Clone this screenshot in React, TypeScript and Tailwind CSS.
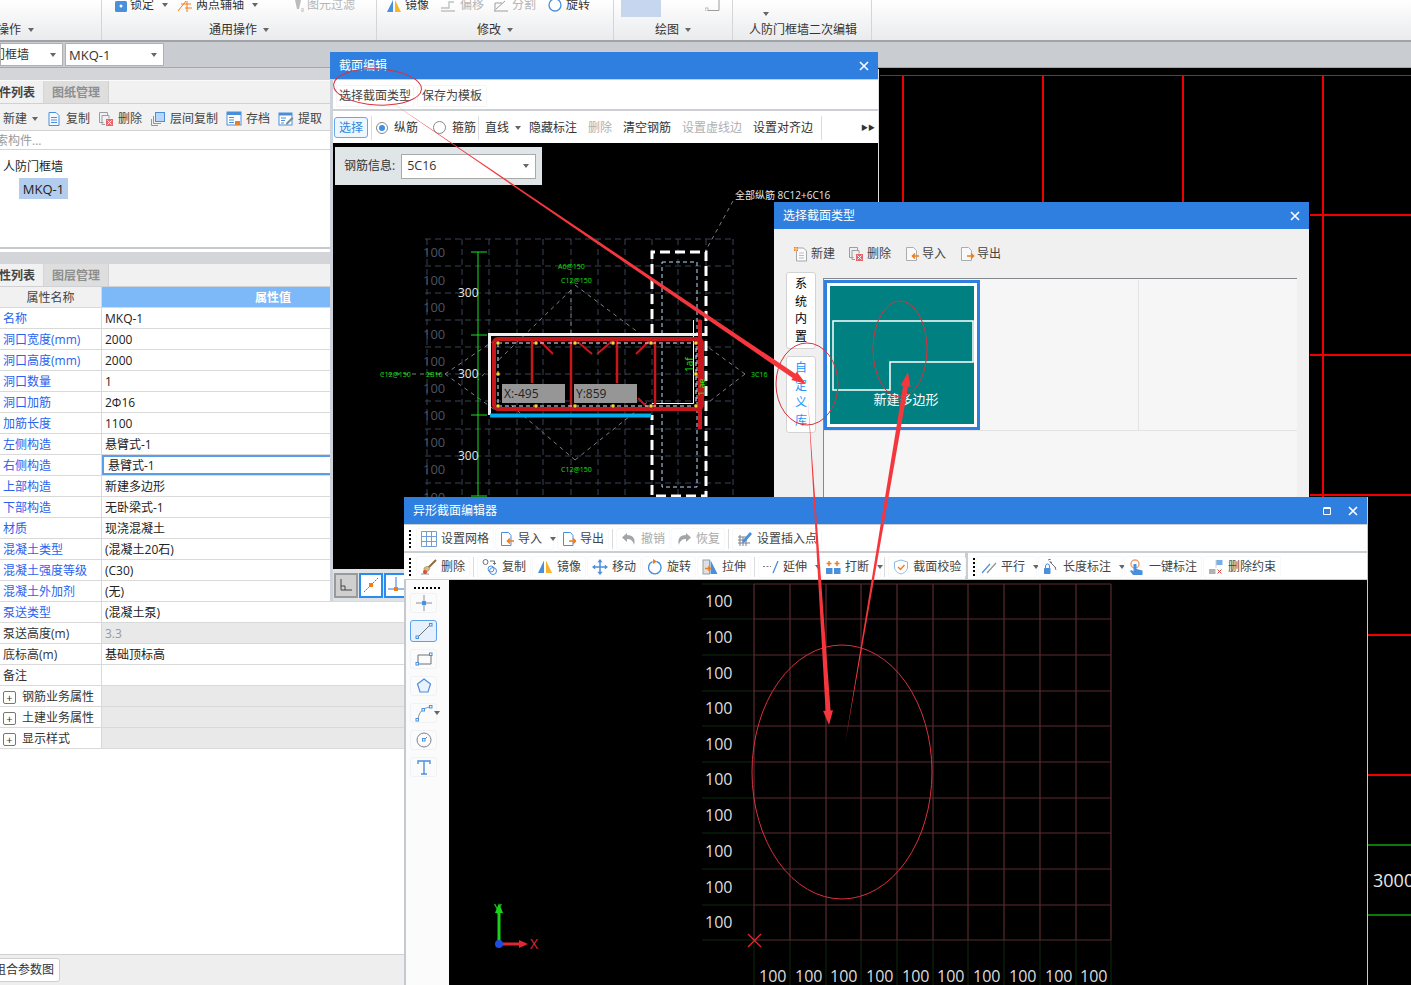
import type { ReactNode } from "react";

const Svg = ({ children, w = 16, h = 16 }: { children: ReactNode; w?: number; h?: number }) => (
  <svg width={w} height={h} viewBox={`0 0 ${w} ${h}`} fill="none" className="shrink-0">
    {children}
  </svg>
);

const B = "#4a8fdc";
const O = "#f07d1a";

const icons: Record<string, ReactNode> = {
  copy: (
    <Svg>
      <path d="M3 1.5h7l3 3v10H3z" stroke={B} fill="#f3f8fe" />
      <path d="M5 6.5h6M5 9h6M5 11.5h6" stroke={B} />
    </Svg>
  ),
  del: (
    <Svg>
      <path d="M1.5 1.5h8v3M1.5 1.5v10h4" stroke="#9a9da3" />
      <path d="M4 4.5h7v3M4 4.5v9h3" stroke="#9a9da3" />
      <rect x="8" y="8" width="7" height="7" fill="#e8636b" />
      <path d="M9.5 9.5l4 4M13.5 9.5l-4 4" stroke="#fff" />
    </Svg>
  ),
  layer: (
    <Svg>
      <rect x="5.5" y="1.5" width="9" height="9" fill="#b8d6f8" stroke={B} />
      <path d="M3.5 5v7.5H11M1.5 8v6.5H8" stroke={O} />
    </Svg>
  ),
  save: (
    <Svg>
      <rect x="1" y="1" width="14" height="13" fill="#fff" stroke={B} />
      <rect x="1" y="1" width="14" height="3" fill={B} />
      <path d="M3 6.5h5M3 9h5M3 11.5h5" stroke={B} />
      <rect x="9" y="10" width="5" height="4" fill={O} />
    </Svg>
  ),
  extract: (
    <Svg>
      <rect x="1" y="2" width="13" height="12" fill="#fff" stroke={B} />
      <rect x="1" y="2" width="13" height="2.5" fill={B} />
      <path d="M3 7h5M3 9.5h4M3 12h3" stroke={B} />
      <path d="M8 12l6-6 1.5 1.5-6 6H8z" fill="#7f8b99" />
    </Svg>
  ),
  newDoc: (
    <Svg>
      <path d="M3.5 2h7l3 3v10h-10z" stroke="#a4a7ab" fill="#fafafa" />
      <path d="M6 7h5M6 9.5h5M6 12h5" stroke="#b9bcc0" />
      <rect x="1" y="1" width="4" height="4" fill={O} />
      <path d="M1 3h4M3 1v4" stroke="#fff" strokeWidth=".6" />
    </Svg>
  ),
  importDoc: (
    <Svg>
      <path d="M2.5 1.5h7l3 3v10h-10z" stroke="#a9adb3" fill="#f9f9f9" />
      <path d="M15 10H9M11 7.5L8.5 10l2.5 2.5" stroke={O} strokeWidth="1.6" />
    </Svg>
  ),
  exportDoc: (
    <Svg>
      <path d="M2.5 1.5h7l3 3v10h-10z" stroke="#a9adb3" fill="#f9f9f9" />
      <path d="M8 10h6M12 7.5l2.5 2.5-2.5 2.5" stroke={O} strokeWidth="1.6" />
    </Svg>
  ),
  importBlue: (
    <Svg w={14}>
      <path d="M1.5 1.5h7l2.5 3v10h-9.500z" stroke={B} fill="#fff" />
      <path d="M14 10H8M10 7.500L7.500 10l2.500 2.500" stroke={O} strokeWidth="1.6" />
    </Svg>
  ),
  exportBlue: (
    <Svg w={14}>
      <path d="M1.5 1.5h7l2.5 3v10h-9.500z" stroke={B} fill="#fff" />
      <path d="M7 10h6M11 7.500l2.500 2.500-2.500 2.500" stroke={O} strokeWidth="1.6" />
    </Svg>
  ),
  grid: (
    <Svg>
      <path d="M.5.5h15v15H.5zM5.5.5v15M10.5.5v15M.5 5.5h15M.5 10.5h15" stroke="#6f9fd8" />
    </Svg>
  ),
  undo: (
    <Svg>
      <path d="M6 2L1 6.5 6 11V8c3 0 6 1 7 6 2-6-1-10-7-10z" fill="#a3a6a9" />
    </Svg>
  ),
  redo: (
    <Svg>
      <path d="M10 2l5 4.5-5 4.5V8c-3 0-6 1-7 6-2-6 1-10 7-10z" fill="#a3a6a9" />
    </Svg>
  ),
  insert: (
    <Svg>
      <path d="M1 6h8M1 9h9M1 12h12M3 4v11M6 6v9M9 9v6" stroke="#7b7f85" />
      <path d="M6 9l7-8 2 2-7 8-3 1z" fill={B} />
    </Svg>
  ),
  broom: (
    <Svg>
      <path d="M15 1L7 9" stroke="#8a6d3b" strokeWidth="2" />
      <path d="M3 9c2-2 4-2 6 0-1 3-3 5-6 5z" fill="#d9b98a" stroke="#9c8054" strokeWidth=".6" />
      <circle cx="4" cy="13" r="2" fill="#d8552a" />
      <path d="M0 15h8" stroke="#666" strokeWidth=".7" />
    </Svg>
  ),
  copy2: (
    <Svg>
      <circle cx="3.5" cy="3" r="2.5" stroke="#6b7077" />
      <path d="M8 2h4.5v3M11 4l1.5 1.5L14 4" stroke="#6b7077" />
      <circle cx="9" cy="10" r="3" stroke={B} />
      <circle cx="11" cy="12" r="3.5" stroke={B} />
    </Svg>
  ),
  mirror: (
    <Svg>
      <path d="M7 1.5V14H1z" fill={B} />
      <path d="M9 1.5V14h6z" fill="#f7b52c" />
    </Svg>
  ),
  move: (
    <Svg>
      <path d="M8 2v12M2 8h12" stroke={B} strokeWidth="1.5" />
      <path d="M8 0l2.6 3.2H5.4zM8 16l2.6-3.2H5.4zM0 8l3.2-2.6v5.2zM16 8l-3.2-2.6v5.2z" fill={B} />
    </Svg>
  ),
  rotate: (
    <Svg>
      <path d="M5.5 2.7a6.3 6.3 0 1 0 4-.2" stroke={B} strokeWidth="1.4" />
      <path d="M6 0v5l4-2.5z" fill={O} />
    </Svg>
  ),
  stretch: (
    <Svg>
      <rect x="1" y="1" width="6.5" height="14" fill="#dde0e3" stroke="#9a9da1" />
      <path d="M8.5 1L15.5 15h-7z" fill={B} />
      <path d="M3 9.5h5M6 7.5l2.5 2-2.5 2" stroke={O} strokeWidth="1.4" />
    </Svg>
  ),
  extend: (
    <Svg>
      <path d="M0 7.5h8" stroke="#7b7f85" strokeDasharray="2 1.5" />
      <path d="M10 14l5-12" stroke={B} strokeWidth="1.3" />
    </Svg>
  ),
  cut: (
    <Svg>
      <rect x="1" y="9" width="6.5" height="6" fill={B} />
      <rect x="9" y="9" width="6.5" height="6" fill={B} />
      <path d="M4 2v5M1.5 4.5h5M12 2v5M9.5 4.5h5" stroke={O} strokeWidth="1.5" />
    </Svg>
  ),
  shield: (
    <Svg>
      <path d="M8 1l6.5 2v5c0 3.5-3 6-6.5 7-3.5-1-6.5-3.5-6.5-7V3z" stroke="#8db9ea" />
      <path d="M5 8l2.5 2.5L11.5 6" stroke={O} strokeWidth="1.4" />
    </Svg>
  ),
  parallel: (
    <Svg>
      <path d="M1 14L9 5" stroke={B} strokeWidth="1.2" />
      <path d="M6 14l9-10" stroke="#8f9398" strokeWidth="1.2" />
    </Svg>
  ),
  length: (
    <Svg>
      <rect x="1" y="9" width="6.5" height="6" rx=".7" fill={B} />
      <path d="M2.5 9V7a2 2 0 0 1 4 0v2" stroke={B} />
      <path d="M5 1l3-1M7 3l6 6M9 3.5L6.5 2.5M12 8.5l1 2.5" stroke="#6d7177" />
    </Svg>
  ),
  touch: (
    <Svg>
      <circle cx="6" cy="5" r="4" stroke="#ee9a6c" strokeWidth="1.4" />
      <path d="M4.5 5h3v5l6 1.5V16H4l-3-4 1.5-1 2 1.5z" fill={B} />
    </Svg>
  ),
  unlink: (
    <Svg>
      <rect x="1" y="10" width="6.5" height="5" fill="#aeb1b5" />
      <rect x="8" y="1" width="6.5" height="5" fill="#79aee8" />
      <path d="M8 1v8" stroke="#cfd2d6" />
      <path d="M9.5 10.5l4 4M13.5 10.5l-4 4" stroke="#d6453d" />
    </Svg>
  ),
};

const Caret = ({ className = "" }: { className?: string }) => (
  <span className={`inline-block h-0 w-0 border-x-[3.5px] border-t-[4px] border-x-transparent border-t-[#666] ${className}`} />
);

const Tool = ({ icon, label, caret, muted, className = "" }: { icon: string; label: string; caret?: boolean; muted?: boolean; className?: string }) => (
  <div className={`flex h-[22px] items-center gap-[3px] rounded-[3px] border border-[#f8f8f8] px-[4px] ${className}`}>
    {icons[icon]}
    <span className={`ml-[1px] whitespace-nowrap ${muted ? "text-[#aaa]" : "text-[#444]"}`}>{label}</span>
    {caret && <Caret className="ml-[5px] mr-[-7px]" />}
  </div>
);

const Sep = () => <div className="mx-[2px] h-[20px] w-px bg-[#d9dbde]" />;

const Dots = () => (
  <div className="mx-[2px] flex flex-col gap-[2px]">
    <span className="h-[2px] w-[2px] bg-black" />
    <span className="h-[2px] w-[2px] bg-black" />
    <span className="h-[2px] w-[2px] bg-black" />
    <span className="h-[2px] w-[2px] bg-black" />
    <span className="h-[2px] w-[2px] bg-black" />
  </div>
);

const TitleBar = ({ title, children }: { title: string; children?: ReactNode }) => (
  <div className="flex h-[27px] shrink-0 items-center justify-between bg-[#2e7fe0] pl-[9px] pr-[8px] text-white">
    <span>{title}</span>
    <div className="flex items-center gap-[16px]">
      {children}
      <svg width="10" height="10" viewBox="0 0 10 10" className="mr-[1px]">
        <path d="M1 1l8 8M9 1l-8 8" stroke="#fff" strokeWidth="1.6" />
      </svg>
    </div>
  </div>
);

const rows: { name: string; value?: string; blue?: boolean; gray?: boolean; sel?: boolean }[] = [
  { name: "名称", value: "MKQ-1", blue: true },
  { name: "洞口宽度(mm)", value: "2000", blue: true },
  { name: "洞口高度(mm)", value: "2000", blue: true },
  { name: "洞口数量", value: "1", blue: true },
  { name: "洞口加筋", value: "2Φ16", blue: true },
  { name: "加筋长度", value: "1100", blue: true },
  { name: "左侧构造", value: "悬臂式-1", blue: true },
  { name: "右侧构造", value: "悬臂式-1", blue: true, sel: true },
  { name: "上部构造", value: "新建多边形", blue: true },
  { name: "下部构造", value: "无卧梁式-1", blue: true },
  { name: "材质", value: "现浇混凝土", blue: true },
  { name: "混凝土类型", value: "(混凝土20石)", blue: true },
  { name: "混凝土强度等级", value: "(C30)", blue: true },
  { name: "混凝土外加剂", value: "(无)", blue: true },
  { name: "泵送类型", value: "(混凝土泵)", blue: true },
  { name: "泵送高度(m)", value: "3.3", gray: true },
  { name: "底标高(m)", value: "基础顶标高" },
  { name: "备注", value: "" },
];

const Expand = ({ name, gray = true }: { name: string; gray?: boolean }) => (
  <div className="flex h-[21px] border-b border-[#d9d9d9]">
    <div className="flex w-[102px] items-center border-r border-[#d9d9d9] pl-[3px] pt-[2px]">
      <span className="mr-[6px] flex h-[13px] w-[13px] items-center justify-center rounded-[2px] border border-[#777] text-[11px] leading-none text-[#333]">+</span>
      <span>{name}</span>
    </div>
    <div className={`flex-1 ${gray ? "bg-[#e9e9e9]" : ""}`} />
  </div>
);

const Ribbon = () => (
  <div className="flex h-[42px] shrink-0 border-b-2 border-[#a0a2a5] bg-gradient-to-b from-white to-[#e9ebed]">
    <div className="relative flex w-[102px] flex-col justify-end border-r border-[#d3d5d8] pb-[2px]">
      <div className="flex items-center gap-[7px] pl-0 text-[#333]">
        <span className="-ml-[3px]">操作</span>
        <Caret />
      </div>
    </div>
    <div className="flex w-[275px] flex-col border-r border-[#d3d5d8] pb-[2px]">
      <div className="flex h-[12px] items-end gap-[3px] overflow-hidden pl-[13px] text-[#333]">
        <svg width="12" height="12" viewBox="0 0 12 12" className="shrink-0">
          <rect x="0" y="1" width="12" height="11" rx="1.5" fill={B} />
          <circle cx="6" cy="6" r="1.5" fill="#fff" />
        </svg>
        <span className="leading-[15px]">锁定</span>
        <Caret className="mx-[5px] mb-[5px]" />
        <svg width="16" height="12" viewBox="0 0 16 12" fill="none" className="ml-[1px] shrink-0">
          <path d="M1 11L9 1M4 4h10M8 8h7M10 1v11" stroke={O} />
        </svg>
        <span className="leading-[15px]">两点辅轴</span>
        <Caret className="mx-[5px] mb-[5px]" />
        <svg width="10" height="12" viewBox="0 0 10 12" fill="none" className="ml-[28px] shrink-0">
          <path d="M1 0h6L5 9H3z" fill="#b9bbbd" />
          <path d="M7 9h3M7 11h3" stroke="#b9bbbd" />
        </svg>
        <span className="leading-[15px] text-[#b5b5b5]">图元过滤</span>
      </div>
      <div className="mt-auto flex items-center justify-center gap-[6px] text-[#333]">
        <span>通用操作</span>
        <Caret />
      </div>
    </div>
    <div className="flex w-[237px] flex-col border-r border-[#d3d5d8] pb-[2px]">
      <div className="flex h-[12px] items-end overflow-hidden pl-[10px] text-[#333]">
        <svg width="14" height="12" viewBox="0 0 14 12" className="shrink-0">
          <path d="M6 0v12H0z" fill={B} />
          <path d="M8 0v12h6z" fill="#f7b52c" />
        </svg>
        <span className="ml-[4px] leading-[15px]">镜像</span>
        <svg width="16" height="12" viewBox="0 0 16 12" fill="none" className="ml-[11px] shrink-0">
          <path d="M1 11h14M1 8h8V2h5" stroke="#bfc1c3" strokeWidth="1.4" />
        </svg>
        <span className="ml-[4px] leading-[15px] text-[#b5b5b5]">偏移</span>
        <svg width="16" height="12" viewBox="0 0 16 12" fill="none" className="ml-[9px] shrink-0">
          <path d="M1 11h14M2 11V3h7M3 9l9-8" stroke="#9c9ea0" />
        </svg>
        <span className="ml-[3px] leading-[15px] text-[#b5b5b5]">分割</span>
        <svg width="14" height="12" viewBox="0 0 14 12" className="ml-[12px] shrink-0">
          <circle cx="7" cy="5" r="6" stroke={B} fill="#fff" strokeWidth="1.3" />
        </svg>
        <span className="ml-[4px] leading-[15px]">旋转</span>
      </div>
      <div className="mt-auto flex items-center justify-center gap-[6px] text-[#333]">
        <span>修改</span>
        <Caret />
      </div>
    </div>
    <div className="flex w-[119px] flex-col border-r border-[#d3d5d8] pb-[2px]">
      <div className="flex items-start justify-between pl-[7px] pr-[11px]">
        <div className="h-[17px] w-[40px] bg-[#c5d6ee]" />
        <svg width="16" height="11" viewBox="0 0 16 11" fill="none">
          <path d="M1 10.5h13V0M1 10.5V8" stroke="#9a9c9f" />
          <rect x="0" y="8" width="3" height="3" fill="#fff" stroke="#9a9c9f" strokeWidth=".7" />
        </svg>
      </div>
      <div className="mt-auto flex items-center justify-center gap-[6px] text-[#333]">
        <span>绘图</span>
        <Caret />
      </div>
    </div>
    <div className="flex w-[139px] flex-col border-r border-[#d3d5d8] pb-[2px] pl-[2px]">
      <div className="pl-[28px] pt-[6px] leading-none">
        <Caret className="block" />
      </div>
      <div className="mt-auto whitespace-nowrap text-center text-[#333]">人防门框墙二次编辑</div>
    </div>
  </div>
);

const Tabs = ({ first, second }: { first: string; second: string }) => (
  <div className="flex h-[23px] shrink-0 border-b border-[#cfd1d4] bg-[#f1f1f1]">
    <div className="flex w-[44px] items-center justify-end overflow-hidden border-r border-[#d6d6d6] pr-[8px] pt-[2px] font-semibold whitespace-nowrap text-[#444]">
      {first}
    </div>
    <div className="flex w-[65px] items-center justify-center border-r border-[#d0d0d0] bg-[#dedede] pt-[2px] font-semibold text-[#8e8e8e]">{second}</div>
  </div>
);

const LeftPanel = () => (
  <div className="flex w-[404px] shrink-0 flex-col overflow-hidden bg-white">
    <div className="h-[13px] shrink-0 border-b border-[#fafafa] bg-[#d3d5d9]" />
    <Tabs first="构件列表" second="图纸管理" />
    <div className="flex h-[27px] shrink-0 items-center border-b border-[#cfd1d4] bg-[#f2f2f2] pl-[3px] pt-[3px] text-[#444]">
      <span>新建</span>
      <Caret className="ml-[5px] mr-[8px]" />
      <div className="-ml-[1px] flex items-center gap-[1px]">
        <div className="flex items-center gap-[4px] pl-[1px] pr-[7px]">{icons.copy}<span>复制</span></div>
        <div className="flex items-center gap-[4px] pr-[7px]">{icons.del}<span>删除</span></div>
        <div className="flex items-center gap-[4px] pr-[7px]">{icons.layer}<span>层间复制</span></div>
        <div className="flex items-center gap-[4px] pr-[7px]">{icons.save}<span>存档</span></div>
        <div className="flex items-center gap-[4px]">{icons.extract}<span>提取</span></div>
      </div>
    </div>
    <div className="h-[19px] shrink-0 overflow-hidden border-b border-[#d3d5d8] whitespace-nowrap text-[#9a9a9a]">
      <span className="-ml-[16px] inline-block leading-[20px]">搜索构件...</span>
    </div>
    <div className="h-[97px] shrink-0 pl-[3px] pt-[8px] text-[#222]">
      <div className="leading-[18px]">人防门框墙</div>
      <div className="mt-[2px] ml-[16px] flex h-[21px] w-[49px] items-center justify-center bg-[#b3cdee] text-[13px]">MKQ-1</div>
    </div>
    <div className="h-[5px] shrink-0 border-t-2 border-[#c6c8cb] bg-white" />
    <div className="h-[12px] shrink-0 bg-[#d3d5d9]" />
    <Tabs first="属性列表" second="图层管理" />
    <div className="flex h-[21px] shrink-0 border-b border-[#d9d9d9]">
      <div className="flex w-[102px] items-center justify-center border-r border-[#d9d9d9] bg-[#f1f1f1] pt-[2px] text-[#444]">属性名称</div>
      <div className="flex-1 bg-[#7db8f8] pl-[153px] leading-[22px] font-semibold text-white">属性值</div>
    </div>
    {rows.map((r) => (
      <div key={r.name} className="flex h-[21px] shrink-0 border-b border-[#d9d9d9]">
        <div className={`flex w-[102px] items-center border-r border-[#d9d9d9] pl-[3px] pt-[2px] whitespace-nowrap ${r.blue ? "text-[#2a62ee]" : "text-[#333]"}`}>
          {r.name}
        </div>
        {r.sel ? (
          <div className="flex flex-1 items-center border-2 border-[#5b9de6] pl-[4px] pt-[2px] text-[#222]">{r.value}</div>
        ) : (
          <div className={`flex flex-1 items-center pl-[3px] pt-[2px] ${r.gray ? "bg-[#e9e9e9] text-[#999]" : "text-[#222]"}`}>{r.value}</div>
        )}
      </div>
    ))}
    <Expand name="钢筋业务属性" />
    <Expand name="土建业务属性" />
    <Expand name="显示样式" />
    <div className="flex-1" />
    <div className="flex h-[31px] shrink-0 items-center border-t border-[#cfd1d4] bg-[#eeeeee]">
      <div className="-ml-[12px] rounded-[3px] border border-[#cfcfcf] bg-white px-[5px] py-[3px] whitespace-nowrap text-[#333]">组合参数图</div>
    </div>
  </div>
);

const hGrid = [239, 266, 293, 320, 347, 374, 401, 429, 456, 483];
const vGrid = [427, 462, 489, 517, 543, 571, 598, 625, 652, 678, 706, 733];
const dotsX = [498, 536, 575, 613, 651, 696];

const SectionDrawing = () => (
  <svg viewBox="333 143 545 427" width="545" height="427" fill="none" className="absolute left-0 top-0">
    <g stroke="#3b4252" strokeDasharray="6 4">
      {hGrid.map((y) => <line key={y} x1="425" x2="733" y1={y} y2={y} />)}
      {vGrid.map((x) => <line key={x} x1={x} x2={x} y1="239" y2="497" />)}
    </g>
    <g fill="#4d5363" fontSize="13">
      {[252, 280, 307, 334, 361, 388, 415, 442, 469, 497].map((y) => (
        <text key={y} x="423" y={y + 5}>100</text>
      ))}
    </g>
    <g stroke="#7b7f85" strokeDasharray="4 4">
      <path d="M571 290L478 380M575 285L655 345M575 460L505 400M575 460L650 400M445 374L495 340M445 374L495 410M745 374L705 345M745 374L705 405M440 374H382M733 201L706 250M571 290V340" />
    </g>
    <path d="M478 252V496M471 252H487M471 335H487M471 415H487M471 496H487" stroke="#1de01d" />
    <g fill="#e6e6e6" fontSize="12">
      <text x="458" y="297">300</text>
      <text x="458" y="378">300</text>
      <text x="458" y="460">300</text>
    </g>
    <path d="M652 334V252H706V496H652V415" stroke="#fff" strokeWidth="3" strokeDasharray="10 5" />
    <rect x="662" y="262" width="35" height="225" stroke="#bcd9ff" strokeDasharray="4 3" />
    <path d="M652 403.5H693.5V320" stroke="#fff" />
    <path d="M489.5 415V334.5H705" stroke="#f0f0f0" strokeWidth="3" />
    <g stroke="#c8161d">
      <rect x="494" y="339" width="208" height="70" rx="4" strokeWidth="4" />
      <path d="M700 320V429" strokeWidth="4" />
      <path d="M532 339V383M571 339V409M617 339V383M655 339V409" strokeWidth="2.5" />
      <path d="M538 339L553 354M578 342L592 354M612 341L597 354M650 340L636 354M638 398L648 408" strokeWidth="2" />
    </g>
    <path d="M490 415.5H651" stroke="#00aeef" strokeWidth="4" />
    <rect x="498" y="343" width="198" height="63" stroke="#e8f2ff" strokeDasharray="4 3" />
    <g fill="#ffd633" stroke="#222" strokeWidth=".5">
      {dotsX.map((x) => <circle key={`t${x}`} cx={x} cy="343" r="2" />)}
      {dotsX.map((x) => <circle key={`b${x}`} cx={x} cy="406" r="2" />)}
      <circle cx="498" cy="374" r="2" />
      <circle cx="696" cy="374" r="2" />
    </g>
    <rect x="502" y="384" width="63" height="19" fill="#969696" />
    <rect x="574" y="384" width="63" height="19" fill="#969696" />
    <g fill="#222" fontSize="12">
      <text x="504" y="398">X:-495</text>
      <text x="576" y="398">Y:859</text>
    </g>
    <g fill="#12e012" fontSize="7">
      <text x="558" y="269">A6@150</text>
      <text x="561" y="283">C12@150</text>
      <text x="561" y="472">C12@150</text>
      <text x="380" y="377">C12@150</text>
      <text x="426" y="377">2B16</text>
      <text x="751" y="377">3C16</text>
      <text x="693" y="372" fontSize="10" transform="rotate(-90 693 372)">1af</text>
      <text x="705" y="396" fontSize="9" transform="rotate(-90 705 396)">1 ae</text>
    </g>
    <text x="735" y="199" fill="#e6e6e6" fontSize="10">全部纵筋 8C12+6C16</text>
  </svg>
);

const SectionEditor = () => (
  <div className="absolute left-[330px] top-[52px] flex h-[549px] w-[548px] flex-col border-l-[3px] border-[#cdd3da] bg-[#ccd0d5]">
    <div className="-ml-[3px]">
      <TitleBar title="截面编辑" />
    </div>
    <div className="mt-px flex h-[29px] shrink-0 items-center gap-[3px] bg-white pl-[3px] pt-[2px] text-[#444]">
      <span className="rounded-[2px] border border-[#f5f5f5] px-[2px] py-[2px]">选择截面类型</span>
      <span className="rounded-[2px] border border-[#f5f5f5] px-[4px] py-[2px]">保存为模板</span>
    </div>
    <div className="mt-[2px] flex h-[32px] shrink-0 items-center bg-white pt-[1px] text-[#333]">
      <span className="ml-[1px] flex h-[21px] w-[34px] items-center justify-center rounded-[3px] border border-[#66a8ee] bg-[#eef6fe] text-[#2f86e0]">选择</span>
      <div className="ml-[3px] mr-[4px] h-[24px] w-px bg-[#d9dbde]" />
      <span className="flex h-[12px] w-[12px] items-center justify-center rounded-full border border-[#888]">
        <span className="h-[6px] w-[6px] rounded-full bg-[#3b8fe8]" />
      </span>
      <span className="ml-[6px]">纵筋</span>
      <span className="ml-[15px] h-[13px] w-[13px] rounded-full border border-[#888]" />
      <span className="ml-[6px]">箍筋</span>
      <div className="ml-[2px] mr-[6px] h-[24px] w-px bg-[#d9dbde]" />
      <span>直线</span>
      <Caret className="ml-[6px]" />
      <span className="ml-[8px]">隐藏标注</span>
      <span className="ml-[11px] text-[#b0b0b0]">删除</span>
      <span className="ml-[11px]">清空钢筋</span>
      <span className="ml-[11px] text-[#b0b0b0]">设置虚线边</span>
      <span className="ml-[11px]">设置对齐边</span>
      <div className="ml-[8px] h-[24px] w-px bg-[#d9dbde]" />
      <span className="ml-auto mr-[3px] text-[7px] text-[#333]">▶▶</span>
    </div>
    <div className="relative h-[426px] shrink-0 overflow-hidden bg-black">
      <SectionDrawing />
      <div className="absolute left-[2px] top-[4px] flex h-[38px] w-[207px] items-center gap-[6px] bg-[#e0e6e7] pl-[9px] text-[#333]">
        <span>钢筋信息:</span>
        <div className="flex h-[25px] w-[135px] items-center justify-between border border-[#a9a9a9] bg-white pl-[5px] pr-[6px] text-[12.5px]">
          5C16
          <Caret />
        </div>
      </div>
    </div>
    <div className="flex flex-1 items-center gap-[1px] bg-[#dfe3e6] px-[1px]">
      <span className="flex h-[25px] w-[24px] items-center justify-center border-2 border-[#9a9a9a] bg-[#cfcfcf]">
        <svg width="14" height="14" viewBox="0 0 14 14" fill="none"><path d="M2 1v11h11M2 8h4v4" stroke="#444" /></svg>
      </span>
      <span className="flex h-[25px] w-[24px] items-center justify-center border-2 border-[#2b8cf0] bg-white">
        <svg width="16" height="16" viewBox="0 0 16 16" fill="none"><path d="M1 15L15 1" stroke="#2b7de0" strokeDasharray="2 1" /><rect x="6" y="6" width="4" height="4" fill={O} /></svg>
      </span>
      <span className="flex h-[25px] w-[21px] items-center justify-center border-2 border-r-0 border-[#2b8cf0] bg-white">
        <svg width="16" height="16" viewBox="0 0 16 16" fill="none"><path d="M8 0v12M0 12h16" stroke="#2b7de0" /><rect x="6" y="10" width="4" height="4" fill={O} /></svg>
      </span>
    </div>
  </div>
);

const TypePicker = () => (
  <div className="absolute left-[774px] top-[202px] flex h-[296px] w-[535px] flex-col bg-[#f0f0f0]">
    <TitleBar title="选择截面类型" />
    <div className="flex h-[43px] shrink-0 items-center gap-[13px] pl-[19px] pt-[7px] text-[#444]">
      <div className="flex items-center gap-[2px]">{icons.newDoc}<span>新建</span></div>
      <div className="flex items-center gap-[3px]">{icons.del}<span>删除</span></div>
      <div className="flex items-center gap-[2px]">{icons.importDoc}<span>导入</span></div>
      <div className="flex items-center gap-[2px]">{icons.exportDoc}<span>导出</span></div>
    </div>
    <div className="flex flex-1 items-start pl-[12px]">
      <div className="mr-[7px] flex w-[30px] shrink-0 flex-col gap-[7px]">
        <div className="flex h-[77px] flex-col items-center justify-center gap-[5.5px] rounded-[3px] border border-[#d3d3d3] bg-white leading-[12px] text-black">
          <span>系</span><span>统</span><span>内</span><span>置</span>
        </div>
        <div className="flex h-[77px] flex-col items-center justify-center gap-[5.5px] rounded-[3px] border border-[#d3d3d3] bg-white leading-[12px] text-[#1e96ff]">
          <span>自</span><span>定</span><span>义</span><span>库</span>
        </div>
      </div>
      <div className="mt-[6px] h-[220px] w-[474px] shrink-0 border-l border-t border-[#85888c] bg-[#f6f6f6] pt-px">
        <div className="flex h-[151px] border-b border-[#e3e3e3]">
          <div className="flex h-[150px] w-[156px] flex-col border-[3px] border-[#2e7fe0] bg-white p-[3px]">
            <div className="flex flex-1 flex-col items-center bg-[#008080]">
              <svg width="143" height="105" viewBox="830 286 143 105" className="shrink-0">
                <path d="M832 321H972V362H889V390H832Z" fill="none" stroke="#fff" strokeWidth="1.5" />
              </svg>
              <span className="ml-[8px] text-[13px] text-white">新建多边形</span>
            </div>
          </div>
          <div className="w-[159px] border-r border-[#e3e3e3]" />
          <div className="flex-1" />
        </div>
      </div>
    </div>
  </div>
);

const SideButton = ({ children, active }: { children: ReactNode; active?: boolean }) => (
  <div className={`flex w-[27px] items-center justify-center rounded-[3px] border ${active ? "h-[22px] border-[#5aa2ee] bg-[#e6f1fd]" : "h-[20px] border-[#f1f2f4]"}`}>
    {children}
  </div>
);

const SideTools = () => (
  <div className="flex w-[45px] shrink-0 flex-col items-start border-l-2 border-[#c4c9cf] bg-[#fbfbfc] pl-[4px] pt-[7px]">
    <div className="ml-[4px] flex gap-[2px]">
      {[0, 1, 2, 3, 4, 5, 6].map((i) => <span key={i} className="h-[2px] w-[2px] bg-black" />)}
    </div>
    <div className="mt-[4px] flex flex-col gap-[7px]">
      <SideButton>
        <svg width="16" height="16" viewBox="0 0 16 16"><path d="M8 0v5M8 11v5M0 8h5M11 8h5" stroke="#8a8f96" /><circle cx="8" cy="8" r="2.5" fill={B} /></svg>
      </SideButton>
      <SideButton active>
        <svg width="18" height="18" viewBox="0 0 18 18" fill="none"><path d="M3 15L15 3" stroke="#6d7278" /><rect x="1" y="14" width="2.5" height="2.5" stroke={B} /><rect x="14.5" y="1.5" width="2.5" height="2.5" stroke={B} /></svg>
      </SideButton>
      <SideButton>
        <svg width="18" height="14" viewBox="0 0 18 14" fill="none"><path d="M3 3h13v9H3z" stroke="#6d7278" /><rect x="1" y="10.5" width="2.5" height="2.5" fill="#fff" stroke={B} /><rect x="14.5" y="1" width="2.5" height="2.5" fill="#fff" stroke={B} /></svg>
      </SideButton>
      <SideButton>
        <svg width="16" height="16" viewBox="0 0 16 16" fill="none"><path d="M8 1l6.5 5-2.5 8H4L1.5 6z" fill="#eaf3fd" stroke={B} strokeWidth="1.2" /></svg>
      </SideButton>
      <div className="relative">
        <SideButton>
          <svg width="18" height="18" viewBox="0 0 18 18" fill="none"><path d="M3 15C4 8 8 4 15 3" stroke="#85898f" /><rect x="1" y="14.5" width="2.5" height="2.5" stroke={B} /><rect x="7" y="4.5" width="2.5" height="2.5" fill="#fff" stroke={B} /><rect x="14.5" y="1.5" width="2.5" height="2.5" stroke={B} /></svg>
        </SideButton>
        <Caret className="absolute -right-[3px] top-[8px]" />
      </div>
      <SideButton>
        <svg width="16" height="16" viewBox="0 0 16 16" fill="none"><circle cx="8" cy="8" r="7" stroke="#80858b" /><path d="M8 8l3-3" stroke={B} /><rect x="6.5" y="6.5" width="2.5" height="2.5" fill="#fff" stroke={B} /></svg>
      </SideButton>
      <SideButton>
        <svg width="14" height="15" viewBox="0 0 14 15" fill="none"><path d="M1 4V1h12v3M7 1v13M4 14h6" stroke={B} strokeWidth="1.4" /></svg>
      </SideButton>
    </div>
  </div>
);

const gx = [754, 790, 826, 861, 897, 933, 968, 1004, 1040, 1076, 1111];
const gy = [584, 619, 655, 691, 726, 762, 798, 833, 869, 905, 940];

const ShapeCanvas = () => (
  <svg viewBox="449 580 918 405" width="918" height="405" fill="none" className="block">
    <g stroke="#0d2a0d">
      {gy.map((y) => <line key={y} x1="702" x2="754" y1={y} y2={y} />)}
      {gx.map((x) => <line key={x} x1={x} x2={x} y1="940" y2="985" />)}
    </g>
    <g stroke="#5b2a30" strokeWidth="1.2">
      {gy.map((y) => <line key={y} x1="754" x2="1111" y1={y} y2={y} />)}
      {gx.map((x) => <line key={x} x1={x} x2={x} y1="584" y2="940" />)}
    </g>
    <g fill="#dddddd" fontSize="16" fontFamily="Open Sans">
      {[607, 643, 679, 714, 750, 785, 821, 857, 893, 928].map((y) => (
        <text key={y} x="705" y={y}>100</text>
      ))}
      {[759, 795, 830, 866, 902, 937, 973, 1009, 1045, 1080].map((x) => (
        <text key={x} x={x} y="982">100</text>
      ))}
    </g>
    <path d="M748 934l13 13M761 934l-13 13" stroke="#e0282e" strokeWidth="1.4" />
    <path d="M499 943V912" stroke="#19d119" strokeWidth="3" />
    <path d="M499 903l-4 10h8z" fill="#19d119" />
    <text x="494" y="914" fill="#19d119" fontSize="14" fontFamily="Open Sans">Y</text>
    <path d="M500 944h20" stroke="#e0282e" strokeWidth="3" />
    <path d="M528 944l-9-4v8z" fill="#e0282e" />
    <text x="530" y="949" fill="#e0282e" fontSize="14" fontFamily="Open Sans">X</text>
    <circle cx="499" cy="944" r="4" fill="#1b4de0" />
  </svg>
);

const ShapeEditor = () => (
  <div className="absolute left-[404px] top-[497px] flex h-[488px] w-[964px] flex-col border-r border-[#c6cad0] bg-[#c9ced3]">
    <TitleBar title="异形截面编辑器">
      <svg width="8" height="8" viewBox="0 0 8 8" className="mr-[1px]">
        <path d="M.5 1.5h7v6h-7z" fill="none" stroke="#fff" />
        <path d="M.5 1h7" stroke="#fff" strokeWidth="2" />
      </svg>
    </TitleBar>
    <div className="mt-px flex h-[26px] shrink-0 items-center gap-[1px] bg-white pl-[3px] pt-[1px]">
      <Dots />
      <div className="ml-[2px] flex items-center gap-[1px]">
        <Tool icon="grid" label="设置网格" />
        <Tool icon="importBlue" label="导入" caret className="mr-[2px]" />
        <Tool icon="exportBlue" label="导出" />
        <Sep />
        <Tool icon="undo" label="撤销" muted />
        <Tool icon="redo" label="恢复" muted />
        <Sep />
        <Tool icon="insert" label="设置插入点" />
      </div>
    </div>
    <div className="mt-[2px] flex h-[26px] shrink-0 gap-[3px]">
      <div className="flex w-[561px] items-center gap-[1px] bg-white pl-[3px] pt-[1px]">
        <Dots />
        <div className="ml-[2px] flex items-center gap-[1px]">
          <Tool icon="broom" label="删除" />
          <Sep />
          <Tool icon="copy2" label="复制" />
          <Tool icon="mirror" label="镜像" />
          <Tool icon="move" label="移动" />
          <Tool icon="rotate" label="旋转" />
          <Tool icon="stretch" label="拉伸" />
          <Sep />
          <Tool icon="extend" label="延伸" caret />
          <Tool icon="cut" label="打断" caret />
          <Sep />
          <Tool icon="shield" label="截面校验" />
        </div>
      </div>
      <div className="flex flex-1 items-center bg-white pl-[3px] pt-[1px]">
        <Dots />
        <div className="-ml-[1px] flex items-center gap-[1px]">
          <Tool icon="parallel" label="平行" caret />
          <Tool icon="length" label="长度标注" caret />
          <Tool icon="touch" label="一键标注" />
          <Tool icon="unlink" label="删除约束" />
        </div>
      </div>
    </div>
    <div className="mt-px flex flex-1 overflow-hidden">
      <SideTools />
      <div className="flex-1 bg-black">
        <ShapeCanvas />
      </div>
    </div>
  </div>
);

const RightCanvas = () => (
  <div className="flex-1 bg-black">
    <svg viewBox="406 68 1005 917" width="1005" height="917" fill="none" className="block">
      <line x1="878.5" x2="878.5" y1="69" y2="204" stroke="#ddd" />
      <path d="M880 75.5H903" stroke="#106a10" />
      <path d="M903 75.5H1411" stroke="#f00000" />
      <g stroke="#f00000" strokeWidth="2">
        <path d="M1310 215H1411M1310 355H1411M1310 495H1411M1368 635H1411M1368 775H1411" />
        <path d="M903 76V204M1043 76V204M1183 76V204M1323 76V497" />
      </g>
      <path d="M1368 845H1411M1368 915H1411" stroke="#0c780c" strokeWidth="2" />
      <text x="1373" y="887" fill="#e8e8e8" fontSize="18" fontFamily="Open Sans">3000</text>
    </svg>
  </div>
);

// tapered annotation arrow, thin at the tail and wide at the head
const taper = (x1: number, y1: number, x2: number, y2: number, w: number, head: number) => {
  const dx = x2 - x1;
  const dy = y2 - y1;
  const len = Math.hypot(dx, dy);
  const ux = dx / len;
  const uy = dy / len;
  const nx = -uy;
  const ny = ux;
  const bx = x2 - ux * head * 1.6;
  const by = y2 - uy * head * 1.6;
  const pts = [
    [x1, y1],
    [bx + (nx * w) / 2, by + (ny * w) / 2],
    [bx + nx * head * 0.55, by + ny * head * 0.55],
    [x2, y2],
    [bx - nx * head * 0.55, by - ny * head * 0.55],
    [bx - (nx * w) / 2, by - (ny * w) / 2],
  ];
  return pts.map((p) => p.join(",")).join(" ");
};

const Annotations = () => (
  <svg viewBox="0 0 1411 985" width="1411" height="985" className="pointer-events-none absolute left-0 top-0">
    <g fill="none" stroke="#d8323c">
      <ellipse cx="377.5" cy="87" rx="44" ry="18" transform="rotate(3 377.5 87)" />
      <ellipse cx="807" cy="384" rx="31" ry="41" />
      <ellipse cx="900" cy="349" rx="27" ry="48" />
      <ellipse cx="842" cy="772" rx="90" ry="127" />
    </g>
    <g fill="#f5373d">
      <polygon points={taper(388, 100, 806, 384, 5, 9)} />
      <polygon points={taper(808, 400, 829, 725, 5, 9)} />
      <polygon points={taper(845, 744, 908, 372, 5, 9)} />
    </g>
  </svg>
);

export default function App() {
  return (
    <div className="relative h-[985px] w-[1411px] overflow-hidden bg-[#c9ccd1] text-[12px] leading-[16px] text-[#333] [font-family:'Open_Sans','Noto_Sans_CJK_SC',sans-serif]">
      <div className="flex h-full flex-col">
        <Ribbon />
        <div className="flex h-[26px] shrink-0 items-center gap-[2px] border-b border-[#a4a6a9] bg-[#c9ccd1]">
          <div className="flex h-[23px] w-[63px] items-center justify-between overflow-hidden border border-[#aeb0b3] bg-white pr-[6px]">
            <span className="-ml-[32px] whitespace-nowrap">人防门框墙</span>
            <Caret />
          </div>
          <div className="flex h-[23px] w-[99px] items-center justify-between border border-[#aeb0b3] bg-white pl-[3px] pr-[6px] text-[13px]">
            MKQ-1
            <Caret />
          </div>
        </div>
        <div className="flex flex-1 overflow-hidden">
          <LeftPanel />
          <div className="w-[2px] shrink-0 bg-[#c9ced3]" />
          <RightCanvas />
        </div>
      </div>
      <SectionEditor />
      <TypePicker />
      <ShapeEditor />
      <Annotations />
    </div>
  );
}
